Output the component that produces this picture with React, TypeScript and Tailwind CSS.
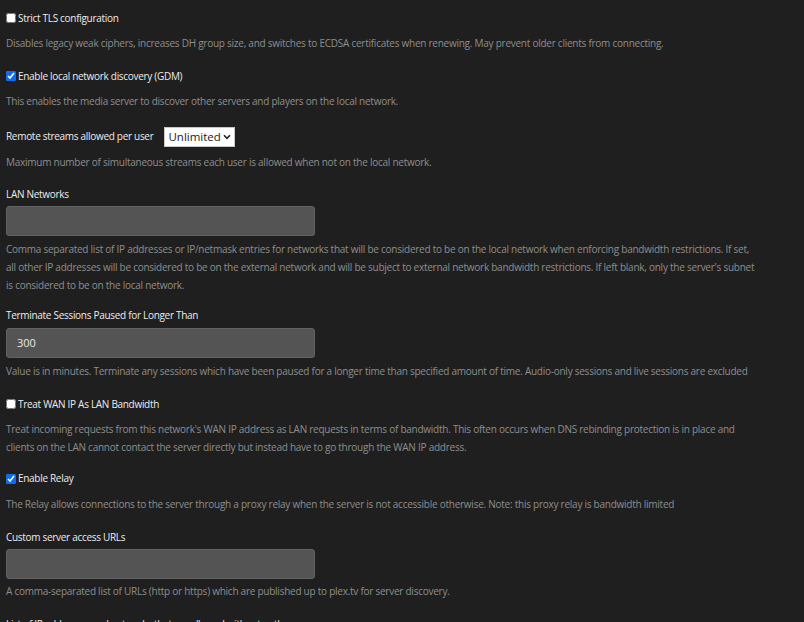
import React from "react";

const font = { fontFamily: '"Open Sans", "Noto Sans", sans-serif' };

function Check({ checked }: { checked?: boolean }) {
  return (
    <input
      type="checkbox"
      defaultChecked={checked}
      className="m-0 h-[10px] w-[10px] shrink-0 accent-[#0a6cf0]"
    />
  );
}

function Desc({ children, className }: { children: React.ReactNode; className: string }) {
  return (
    <p className={"w-[751px] max-w-[751px] text-[10px] leading-[18.3px] tracking-[-0.25px] text-[#8e8e8e] " + className}>
      {children}
    </p>
  );
}

function Field({ value, className }: { value?: string; className: string }) {
  return (
    <div
      className={
        "flex h-[30px] w-[309px] items-center rounded-[3px] border border-[#626262] bg-[#545454] pl-[10px] text-[11px] text-[#e8e8e8] " +
        className
      }
    >
      {value}
    </div>
  );
}

const label = "flex h-[20px] items-center text-[10px] tracking-[-0.3px] text-[#ececec]";

export default function App() {
  return (
    <div className="min-h-[622px] w-[804px] overflow-hidden bg-[#1f1f1f] px-[6px] pt-[8px]" style={font}>
      <div className={label + " gap-[2px]"}>
        <Check />
        <span>Strict TLS configuration</span>
      </div>
      <Desc className="mt-[6px]">
        Disables legacy weak ciphers, increases DH group size, and switches to ECDSA certificates when renewing. May prevent older clients from connecting.
      </Desc>

      <div className={label + " mt-[14px] gap-[2px]"}>
        <Check checked />
        <span>Enable local network discovery (GDM)</span>
      </div>
      <Desc className="mt-[6px]">
        This enables the media server to discover other servers and players on the local network.
      </Desc>

      <div className={label + " mt-[16px] gap-[11px]"}>
        <span>Remote streams allowed per user</span>
        <div className="flex h-[20px] items-center gap-[2px] border border-[#c8c8c8] bg-white pl-[3px] pr-[3px] text-[11.5px] tracking-normal text-[#222]">
          <span>Unlimited</span>
          <svg width="8" height="6" viewBox="0 0 8 6">
            <path d="M1 1.3 L4 4.3 L7 1.3" fill="none" stroke="#222" strokeWidth="1.6" />
          </svg>
        </div>
      </div>
      <Desc className="mt-[6px]">
        Maximum number of simultaneous streams each user is allowed when not on the local network.
      </Desc>

      <div className={label + " mt-[14px]"}>LAN Networks</div>
      <Field className="mt-[1px]" />
      <Desc className="mt-[4px]">
        Comma separated list of IP addresses or IP/netmask entries for networks that will be considered to be on the local network when enforcing bandwidth restrictions. If set, all other IP addresses will be considered to be on the external network and will be subject to external network bandwidth restrictions. If left blank, only the server's subnet is considered to be on the local network.
      </Desc>

      <div className={label + " mt-[11px]"}>Terminate Sessions Paused for Longer Than</div>
      <Field value="300" className="mt-[2px]" />
      <Desc className="mt-[4px]">
        Value is in minutes. Terminate any sessions which have been paused for a longer time than specified amount of time. Audio-only sessions and live sessions are excluded
      </Desc>

      <div className={label + " mt-[14px] gap-[2px]"}>
        <Check />
        <span>Treat WAN IP As LAN Bandwidth</span>
      </div>
      <Desc className="mt-[6px]">
        Treat incoming requests from this network's WAN IP address as LAN requests in terms of bandwidth. This often occurs when DNS rebinding protection is in place and clients on the LAN cannot contact the server directly but instead have to go through the WAN IP address.
      </Desc>

      <div className={label + " mt-[12px] gap-[2px]"}>
        <Check checked />
        <span>Enable Relay</span>
      </div>
      <Desc className="mt-[6px]">
        The Relay allows connections to the server through a proxy relay when the server is not accessible otherwise. Note: this proxy relay is bandwidth limited
      </Desc>

      <div className={label + " mt-[15px]"}>Custom server access URLs</div>
      <Field className="mt-[1px]" />
      <Desc className="mt-[3px]">
        A comma-separated list of URLs (http or https) which are published up to plex.tv for server discovery.
      </Desc>

      <div className={label + " mt-[14px]"}>List of IP addresses and networks that are allowed without auth</div>
    </div>
  );
}
